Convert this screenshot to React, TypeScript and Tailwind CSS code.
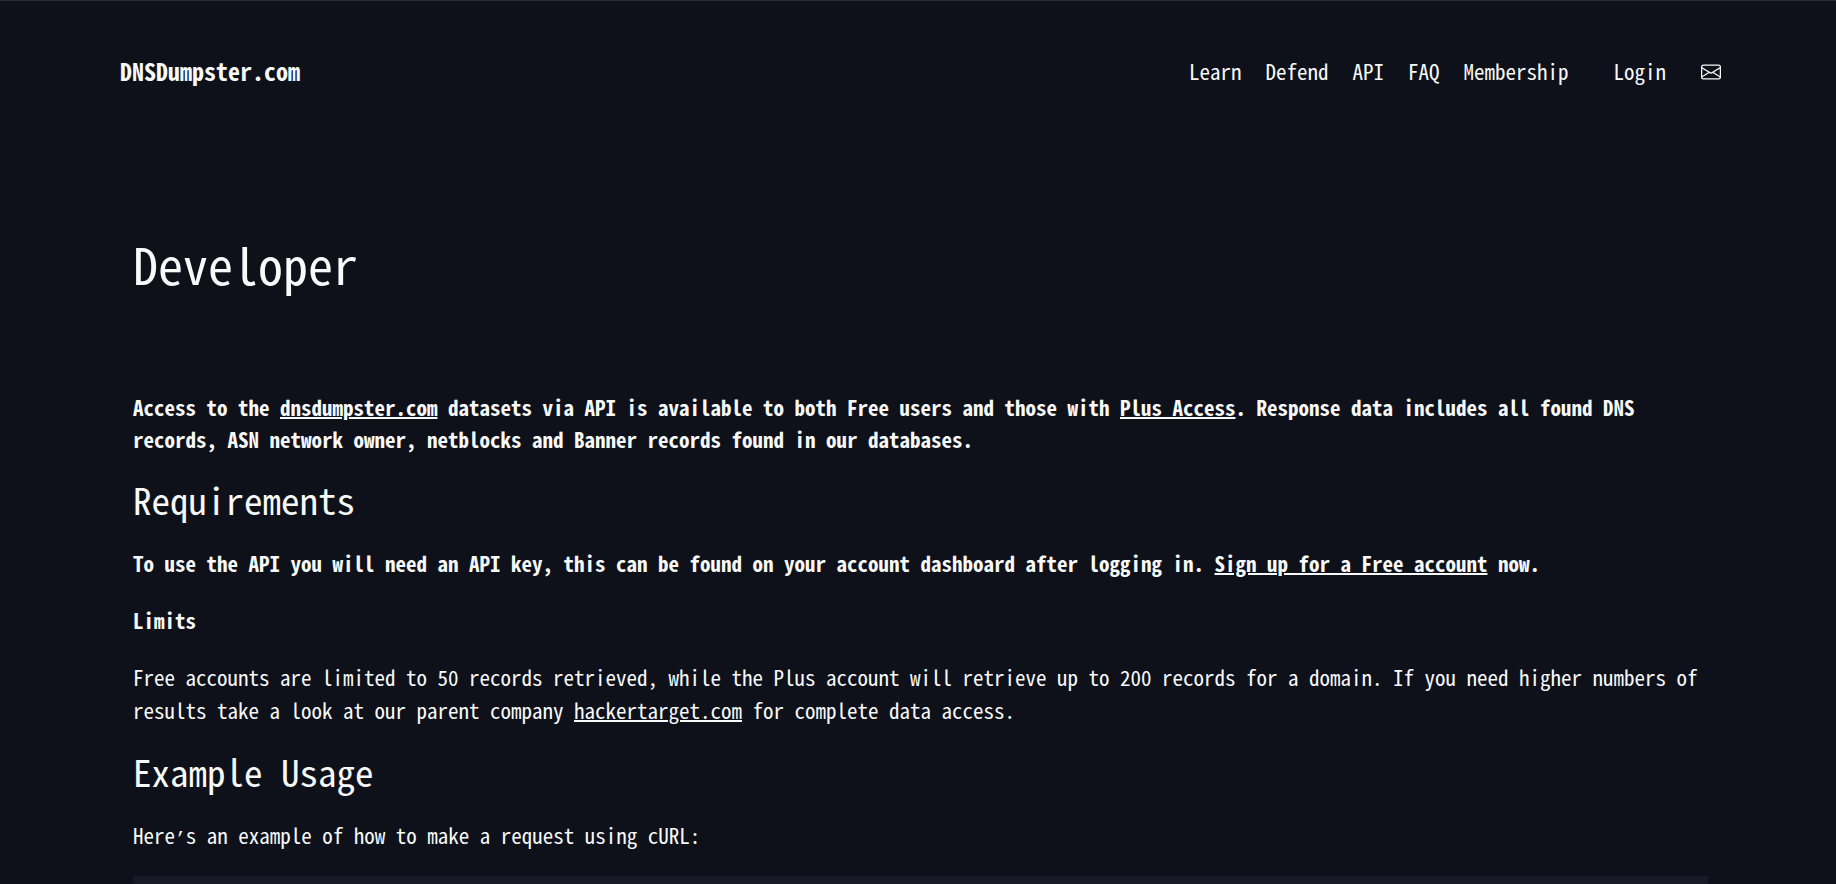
import type { ReactNode } from "react";
import { BsEnvelope } from "react-icons/bs";

const links = ["Learn", "Defend", "API", "FAQ", "Membership"];

function TextLink({ children }: { children: ReactNode }) {
  return (
    <a href="#" className="underline decoration-2 underline-offset-1">
      {children}
    </a>
  );
}

function SectionTitle({ children }: { children: ReactNode }) {
  return <h2 className="pb-1 text-[37px] leading-[40px]">{children}</h2>;
}

export default function App() {
  return (
    <div className="flex min-h-screen flex-col border-t border-[#2a2c35] bg-[#0e1119] pr-[115px] pl-[120px] font-['Noto_Sans_Mono_CJK_SC','Liberation_Mono',monospace] text-[21px] leading-[33px] text-[#f8f9fa]">
      <header className="flex items-center justify-between pt-[54px]">
        <a href="#" className="self-start text-[24px] leading-[31px] font-bold">
          DNSDumpster.com
        </a>
        <nav className="flex items-center">
          <ul className="flex gap-6">
            {links.map((link) => (
              <li key={link}>
                <a href="#">{link}</a>
              </li>
            ))}
          </ul>
          <a href="#" className="ml-[45px]">
            Login
          </a>
          <a href="#" aria-label="Contact" className="ml-[35px]">
            <BsEnvelope className="size-5" />
          </a>
        </nav>
      </header>
      <main className="flex flex-1 flex-col gap-6 px-[13px]">
        <h1 className="mt-[145px] mb-[74px] text-[50px] leading-[60px]">Developer</h1>
        <p className="leading-[32px] font-bold">
          Access to the <TextLink>dnsdumpster.com</TextLink> datasets via API is available to both Free users and those with{" "}
          <TextLink>Plus Access</TextLink>. Response data includes all found DNS records, ASN network owner, netblocks and
          Banner records found in our databases.
        </p>
        <SectionTitle>Requirements</SectionTitle>
        <p className="font-bold">
          To use the API you will need an API key, this can be found on your account dashboard after logging in.{" "}
          <TextLink>Sign up for a Free account</TextLink> now.
        </p>
        <h3 className="font-bold">Limits</h3>
        <p>
          Free accounts are limited to 50 records retrieved, while the Plus account will retrieve up to 200 records for a
          domain. If you need higher numbers of results take a look at our parent company{" "}
          <TextLink>hackertarget.com</TextLink> for complete data access.
        </p>
        <SectionTitle>Example Usage</SectionTitle>
        <p>
          Here<span className="font-['Liberation_Mono',monospace] text-[18px] leading-none">’</span>s an example of how to
          make a request using cURL:
        </p>
        <div className="min-h-2 flex-1 bg-[#1a1a26]" />
      </main>
    </div>
  );
}
